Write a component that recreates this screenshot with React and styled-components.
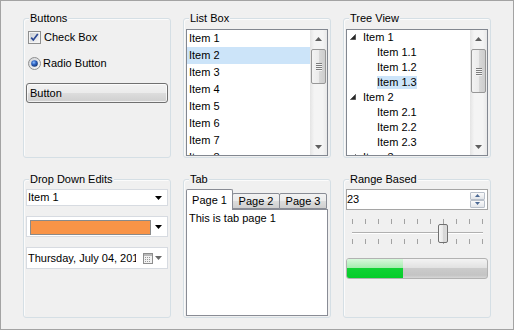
import React from "react";
import styled, { createGlobalStyle } from "styled-components";

const GlobalStyle = createGlobalStyle`
  html, body {
    margin: 0;
    padding: 0;
    background: #ffffff;
  }
  body {
    font-family: "Liberation Sans", Arial, sans-serif;
    font-size: 11px;
    color: #000;
  }
`;

const listItems = ["Item 1", "Item 2", "Item 3", "Item 4", "Item 5", "Item 6", "Item 7", "Item 8"];

const treeItems = [
  { label: "Item 1", level: 0 },
  { label: "Item 1.1", level: 1 },
  { label: "Item 1.2", level: 1 },
  { label: "Item 1.3", level: 1, selected: true },
  { label: "Item 2", level: 0 },
  { label: "Item 2.1", level: 1 },
  { label: "Item 2.2", level: 1 },
  { label: "Item 2.3", level: 1 },
  { label: "Item 3", level: 0 },
];

const ticks = Array.from({ length: 11 }, (_, i) => i);

function App() {
  return (
    <>
      <GlobalStyle />
      <Window>
        <Group $top={12}>
          <Legend>Buttons</Legend>
          <OptionRow>
            <CheckBox />
            <OptionLabel>Check Box</OptionLabel>
          </OptionRow>
          <OptionRow>
            <RadioDot />
            <OptionLabel $gap={2}>Radio Button</OptionLabel>
          </OptionRow>
          <PushButton>Button</PushButton>
        </Group>

        <Group $top={10}>
          <Legend>List Box</Legend>
          <ListFrame>
            <ListItems>
              {listItems.map((item) => (
                <ListItem key={item} $selected={item === "Item 2"}>
                  {item}
                </ListItem>
              ))}
            </ListItems>
            <ScrollBar thumbHeight={35} />
          </ListFrame>
        </Group>

        <Group $top={10}>
          <Legend>Tree View</Legend>
          <ListFrame>
            <ListItems>
              {treeItems.map((node) => (
                <TreeRow key={node.label} $level={node.level}>
                  {node.level === 0 && <Expander />}
                  <TreeText $selected={node.selected}>{node.label}</TreeText>
                </TreeRow>
              ))}
            </ListItems>
            <ScrollBar thumbHeight={44} />
          </ListFrame>
        </Group>

        <Group $top={9}>
          <Legend>Drop Down Edits</Legend>
          <DropStack>
            <Combo $height={17}>
              <ComboText>Item 1</ComboText>
              <DropArrow />
            </Combo>
            <Combo $height={21}>
              <Swatch />
              <DropArrow />
            </Combo>
            <Combo $height={22}>
              <ComboText $width={108}>Thursday, July 04, 2013</ComboText>
              <CalendarIcon />
              <DropArrow color="#6a6a6a" />
            </Combo>
          </DropStack>
        </Group>

        <Group $top={9}>
          <Legend>Tab</Legend>
          <TabStrip>
            <Tab $active>Page 1</Tab>
            <Tab>Page 2</Tab>
            <Tab>Page 3</Tab>
          </TabStrip>
          <TabPage>This is tab page 1</TabPage>
        </Group>

        <Group $top={9}>
          <Legend>Range Based</Legend>
          <NumericBox>
            <NumericText>23</NumericText>
            <Spinner>
              <SpinButton>
                <svg width="5" height="3" viewBox="0 0 5 3">
                  <polygon points="2.5,0 5,3 0,3" fill="#4b6894" />
                </svg>
              </SpinButton>
              <SpinButton>
                <svg width="5" height="3" viewBox="0 0 5 3">
                  <polygon points="0,0 5,0 2.5,3" fill="#4b6894" />
                </svg>
              </SpinButton>
            </Spinner>
          </NumericBox>
          <Slider>
            <TickRow>
              {ticks.map((t) => (
                <Tick key={t} />
              ))}
            </TickRow>
            <Track />
            <TickRow>
              {ticks.map((t) => (
                <Tick key={t} />
              ))}
            </TickRow>
            <SliderThumb />
          </Slider>
          <Progress>
            <ProgressFill style={{ width: `${0.4 * 141}px` }} />
          </Progress>
        </Group>
      </Window>
    </>
  );
}

function ScrollBar({ thumbHeight }) {
  return (
    <ScrollTrack>
      <ScrollArrow>
        <svg width="7" height="4" viewBox="0 0 7 4">
          <polygon points="3.5,0 7,4 0,4" fill="#5f5f5f" />
        </svg>
      </ScrollArrow>
      <ScrollThumb $height={thumbHeight}>
        <Grip />
        <Grip />
        <Grip />
        <Grip />
      </ScrollThumb>
      <ScrollSpacer />
      <ScrollArrow>
        <svg width="7" height="4" viewBox="0 0 7 4">
          <polygon points="0,0 7,0 3.5,4" fill="#5f5f5f" />
        </svg>
      </ScrollArrow>
    </ScrollTrack>
  );
}

function CheckBox() {
  return (
    <svg width="13" height="13" viewBox="0 0 13 13">
      <defs>
        <linearGradient id="cbfill" x1="0" y1="0" x2="1" y2="1">
          <stop offset="0" stopColor="#cbcfd5" />
          <stop offset="1" stopColor="#f6f6f6" />
        </linearGradient>
      </defs>
      <rect x="0.5" y="0.5" width="12" height="12" fill="#f4f4f4" stroke="#8e8f8f" />
      <rect x="2" y="2" width="9" height="9" fill="url(#cbfill)" />
      <path d="M3.2 6.6 L5.3 9 L9.8 3" stroke="#2b4894" strokeWidth="1.7" fill="none" />
    </svg>
  );
}

function RadioDot() {
  return (
    <svg width="13" height="13" viewBox="0 0 13 13">
      <defs>
        <radialGradient id="rdot" cx="0.4" cy="0.35" r="0.7">
          <stop offset="0" stopColor="#8fc1ff" />
          <stop offset="0.45" stopColor="#2e64c4" />
          <stop offset="1" stopColor="#15326b" />
        </radialGradient>
        <linearGradient id="rring" x1="0" y1="0" x2="1" y2="1">
          <stop offset="0" stopColor="#d0d2d6" />
          <stop offset="1" stopColor="#fafafa" />
        </linearGradient>
      </defs>
      <circle cx="6.5" cy="6.5" r="6" fill="url(#rring)" stroke="#8e8f8f" />
      <circle cx="6.5" cy="6.5" r="3.3" fill="url(#rdot)" />
    </svg>
  );
}

function Expander() {
  return (
    <ExpanderIcon width="6" height="6" viewBox="0 0 6 6">
      <polygon points="5.5,0.5 5.5,5.5 0.5,5.5" fill="#262626" stroke="#595959" strokeWidth="1" />
    </ExpanderIcon>
  );
}

function DropArrow({ color = "#000" }) {
  return (
    <ArrowIcon width="7" height="4" viewBox="0 0 7 4">
      <polygon points="0,0 7,0 3.5,4" fill={color} />
    </ArrowIcon>
  );
}

function CalendarIcon() {
  return (
    <CalIcon width="10" height="11" viewBox="0 0 10 11">
      <rect x="0.5" y="0.5" width="9" height="10" fill="#f2f2f2" stroke="#8d8d8d" />
      <rect x="1" y="1" width="8" height="2" fill="#b9b9b9" />
      <g fill="#9a9a9a">
        <rect x="2" y="4" width="1" height="1" />
        <rect x="4" y="4" width="1" height="1" />
        <rect x="6" y="4" width="1" height="1" />
        <rect x="2" y="6" width="1" height="1" />
        <rect x="4" y="6" width="1" height="1" />
        <rect x="6" y="6" width="1" height="1" />
        <rect x="2" y="8" width="1" height="1" />
        <rect x="4" y="8" width="1" height="1" />
        <rect x="6" y="8" width="1" height="1" />
      </g>
    </CalIcon>
  );
}

export default App;

const Window = styled.div`
  box-sizing: border-box;
  width: 514px;
  height: 330px;
  border: 1px solid #a3a3a3;
  background: #f0f0f0;
  padding: 17px 0 0 22px;
  display: grid;
  grid-template-columns: repeat(3, 148px);
  grid-template-rows: 140px 139px;
  column-gap: 12px;
  row-gap: 21px;
`;

const Group = styled.div`
  position: relative;
  box-sizing: border-box;
  border: 1px solid #d5dfe5;
  border-radius: 3px;
  box-shadow: inset 1px 1px 0 #fbfbfb;
  padding: ${(p) => p.$top}px 2px 0;
  display: flex;
  flex-direction: column;
`;

const Legend = styled.span`
  position: absolute;
  top: -7px;
  left: 5px;
  padding: 0 1px;
  line-height: 13px;
  background: #f0f0f0;
`;

const OptionRow = styled.div`
  display: flex;
  align-items: center;
  height: 13px;
  margin: 0 0 13px 2px;
`;

const OptionLabel = styled.span`
  margin-left: ${(p) => p.$gap ?? 3}px;
  line-height: 13px;
`;

const PushButton = styled.div`
  box-sizing: border-box;
  height: 20px;
  border: 1px solid #707070;
  border-radius: 3px;
  padding-left: 3px;
  line-height: 18px;
  background: linear-gradient(#f2f2f2 0%, #ebebeb 50%, #dddddd 51%, #cfcfcf 100%);
  box-shadow: inset 0 0 0 1px rgba(255, 255, 255, 0.7);
`;

const ListFrame = styled.div`
  box-sizing: border-box;
  height: 127px;
  border: 1px solid #828790;
  background: #fff;
  display: flex;
  overflow: hidden;
`;

const ListItems = styled.div`
  flex: 1;
  overflow: hidden;
`;

const ListItem = styled.div`
  height: 17px;
  line-height: 17px;
  padding-left: 2px;
  white-space: nowrap;
  background: ${(p) => (p.$selected ? "#cce4f9" : "transparent")};
`;

const TreeRow = styled.div`
  height: 15px;
  display: flex;
  align-items: center;
  padding-left: ${(p) => (p.$level === 0 ? 3 : 30)}px;
  white-space: nowrap;
`;

const ExpanderIcon = styled.svg`
  flex: none;
  margin: -2px 7px 0 0;
`;

const TreeText = styled.span`
  line-height: 13px;
  background: ${(p) => (p.$selected ? "#cce4f9" : "transparent")};
`;

const ScrollTrack = styled.div`
  flex: none;
  width: 17px;
  display: flex;
  flex-direction: column;
  align-items: center;
  background: linear-gradient(to right, #e4e4e4, #f4f4f4 25%, #f4f4f4 75%, #e8e8e8);
`;

const ScrollArrow = styled.div`
  flex: none;
  width: 17px;
  height: 17px;
  display: flex;
  align-items: center;
  justify-content: center;
`;

const ScrollThumb = styled.div`
  box-sizing: border-box;
  flex: none;
  width: 15px;
  height: ${(p) => p.$height}px;
  margin-top: 2px;
  border: 1px solid #979797;
  border-radius: 2px;
  background: linear-gradient(to right, #f3f3f3, #ebebeb 50%, #d9d9d9 51%, #cdcdcd);
  display: flex;
  flex-direction: column;
  align-items: center;
  justify-content: center;
  gap: 1px;
`;

const Grip = styled.div`
  width: 6px;
  height: 1px;
  background: #7c7c7c;
  box-shadow: 0 1px 0 #f4f4f4;
`;

const ScrollSpacer = styled.div`
  flex: 1;
`;

const DropStack = styled.div`
  display: flex;
  flex-direction: column;
  gap: 10px;
`;

const Combo = styled.div`
  box-sizing: border-box;
  height: ${(p) => p.$height}px;
  border: 1px solid #d7dbe1;
  background: #fff;
  display: flex;
  align-items: center;
  padding-right: 5px;
`;

const ComboText = styled.span`
  flex: ${(p) => (p.$width ? "none" : "1")};
  width: ${(p) => (p.$width ? `${p.$width}px` : "auto")};
  min-width: 0;
  overflow: hidden;
  white-space: nowrap;
  padding-left: 1px;
  line-height: 13px;
`;

const Swatch = styled.div`
  box-sizing: border-box;
  flex: none;
  width: 121px;
  height: 15px;
  margin: 1px 0 0 3px;
  border: 1px solid #8a8a8a;
  background: #f99447;
`;

const ArrowIcon = styled.svg`
  flex: none;
  margin-left: auto;
`;

const CalIcon = styled.svg`
  flex: none;
  margin: 1px 2px 0 7px;
`;

const TabStrip = styled.div`
  display: flex;
  align-items: flex-end;
  height: 21px;
  margin-bottom: -1px;
  position: relative;
  z-index: 1;
`;

const Tab = styled.div`
  box-sizing: border-box;
  width: ${(p) => (p.$active ? 47 : 48)}px;
  height: ${(p) => (p.$active ? 21 : 16)}px;
  margin-left: ${(p) => (p.$active ? 0 : -1)}px;
  margin-bottom: ${(p) => (p.$active ? 0 : 1)}px;
  border: 1px solid #898c95;
  border-bottom: ${(p) => (p.$active ? "none" : "1px solid #898c95")};
  border-radius: 2px 2px 0 0;
  text-align: center;
  line-height: ${(p) => (p.$active ? 20 : 15)}px;
  background: ${(p) =>
    p.$active ? "#ffffff" : "linear-gradient(#f2f2f2 0%, #ebebeb 50%, #dddddd 51%, #cfcfcf 100%)"};
  position: relative;
  z-index: ${(p) => (p.$active ? 2 : 1)};
`;

const TabPage = styled.div`
  box-sizing: border-box;
  height: 107px;
  border: 1px solid #898c95;
  background: #fff;
  padding: 2px 2px;
  line-height: 13px;
`;

const NumericBox = styled.div`
  box-sizing: border-box;
  height: 21px;
  border: 1px solid #a5a5a5;
  background: #fff;
  display: flex;
  align-items: center;
  padding-right: 2px;
`;

const NumericText = styled.span`
  flex: 1;
  line-height: 13px;
`;

const Spinner = styled.div`
  display: flex;
  flex-direction: column;
  gap: 0;
`;

const SpinButton = styled.div`
  box-sizing: border-box;
  width: 15px;
  height: 8px;
  border: 1px solid #b9c0ca;
  border-radius: 1px;
  background: linear-gradient(#fbfbfb, #e3e6ea);
  display: flex;
  align-items: center;
  justify-content: center;
`;

const Slider = styled.div`
  position: relative;
  height: 25px;
  margin-top: 9px;
  padding-left: 6px;
`;

const TickRow = styled.div`
  width: 131px;
  height: 5px;
  display: flex;
  justify-content: space-between;
`;

const Tick = styled.div`
  width: 1px;
  height: 5px;
  background: #a2a2a2;
`;

const Track = styled.div`
  width: 131px;
  height: 1px;
  margin: 8px 0 6px;
  background: #b0b0b0;
  box-shadow: 0 1px 0 #ffffff;
`;

const SliderThumb = styled.div`
  position: absolute;
  top: 5px;
  left: 92px;
  box-sizing: border-box;
  width: 10px;
  height: 19px;
  border: 1px solid #707070;
  border-radius: 2px;
  background: linear-gradient(to right, #f6f6f6, #e8e8e8 50%, #d6d6d6 51%, #dcdcdc);
`;

const Progress = styled.div`
  box-sizing: border-box;
  height: 21px;
  margin-top: 14px;
  border: 1px solid #b2b2b2;
  border-radius: 3px;
  overflow: hidden;
  background: linear-gradient(#f3f3f3 0%, #e2e2e2 45%, #cbcbcb 50%, #c4c4c4 85%, #d6d6d6 100%);
`;

const ProgressFill = styled.div`
  height: 100%;
  background: linear-gradient(#d8f8dc 0%, #a6eeb0 45%, #10d234 50%, #06cd2a 100%);
`;
